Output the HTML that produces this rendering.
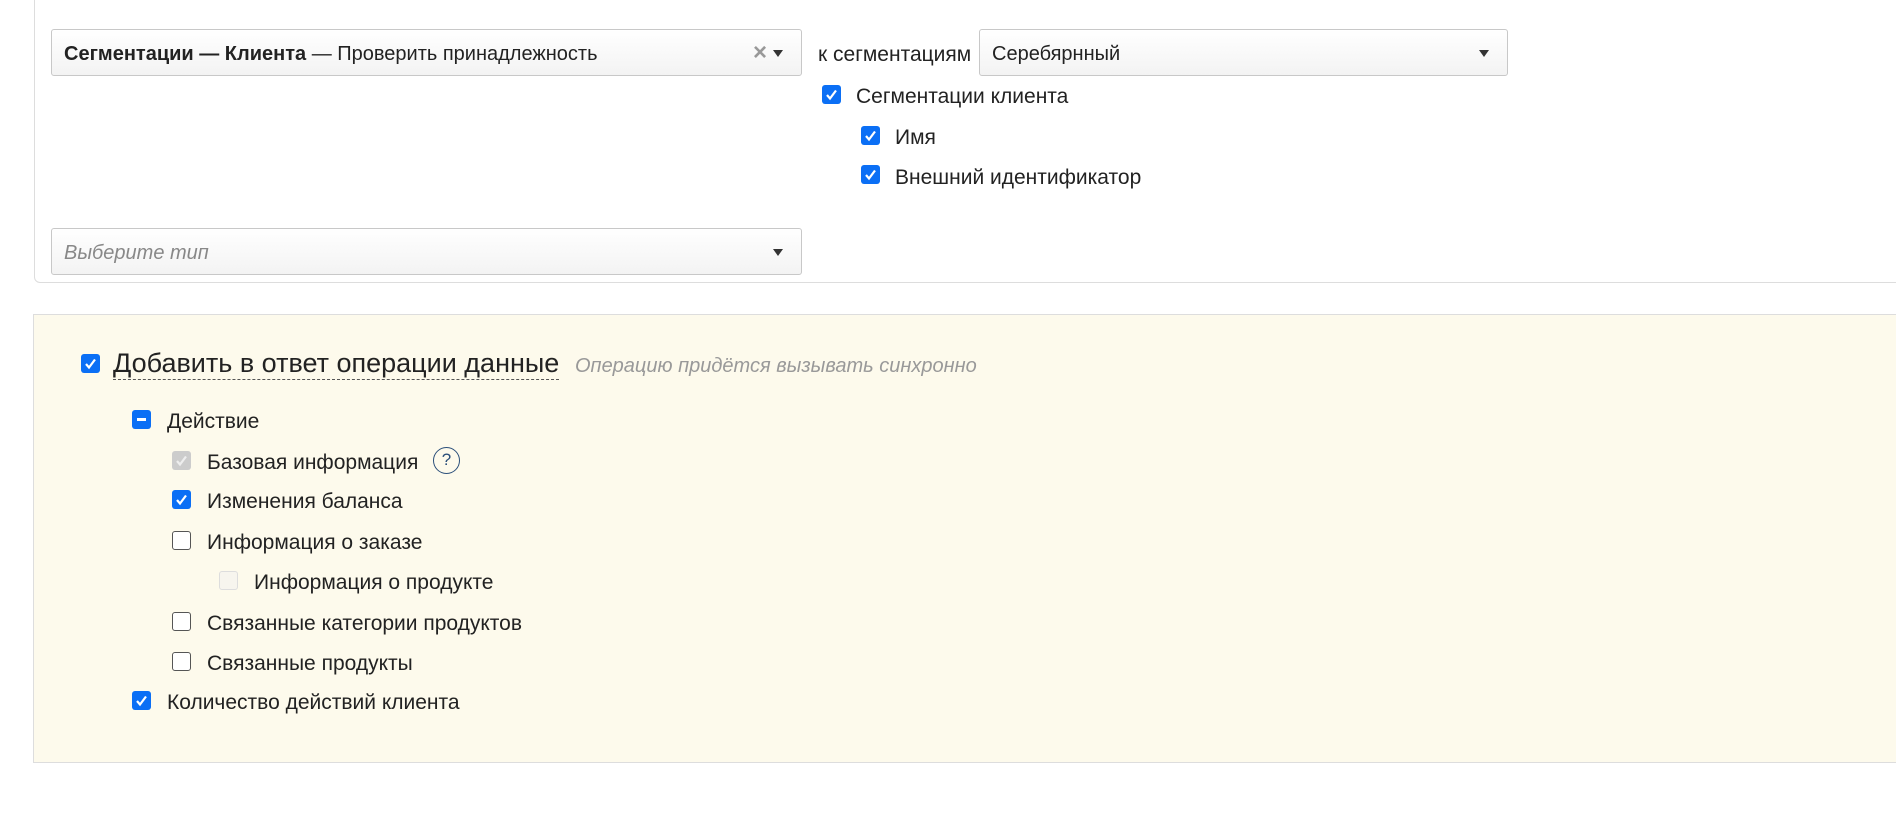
<!DOCTYPE html>
<html><head><meta charset="utf-8"><style>
*{box-sizing:border-box}
body{margin:0;width:1896px;height:822px;background:#fff;font-family:"Liberation Sans",sans-serif;color:#222;position:relative;overflow:hidden;font-size:21px}
.abs{position:absolute}
.panel1{left:34px;top:-5px;width:1900px;height:288px;border:1px solid #ddd;border-radius:0 0 0 6px}
.sel{position:absolute;height:47px;border:1px solid #c8c8c8;border-radius:3px;background:linear-gradient(#fff,#f3f3f3);padding:0 12px;line-height:49px;font-size:20px;white-space:nowrap}
.arr{position:absolute;right:18px;top:20px;width:0;height:0;border-left:5px solid transparent;border-right:5px solid transparent;border-top:7px solid #333}
.cb{position:absolute;width:19px;height:19px;border-radius:3px;background:#0b6ff5}
.cb svg{position:absolute;left:0;top:0}
.ub{position:absolute;width:19px;height:19px;border-radius:3px;border:1.5px solid #555;background:#fff}
.lbl{position:absolute;font-size:21px;line-height:24px;white-space:nowrap}
.panel2{left:33px;top:314px;width:1900px;height:449px;background:#fdfaec;border:1px solid #ddd}
</style></head><body>
<div class="abs panel1"></div>
<div class="sel" style="left:51px;top:29px;width:751px"><b>Сегментации — Клиента</b> — Проверить принадлежность
<span style="position:absolute;right:34px;top:-2px;color:#999;font-size:24px;font-weight:bold">×</span><div class="arr"></div></div>
<div class="lbl" style="left:818px;top:43px">к сегментациям</div>
<div class="sel" style="left:979px;top:29px;width:529px">Серебярнный<div class="arr"></div></div>

<div class="cb" style="left:822px;top:85px"><svg width="19" height="19"><path d="M5 10l3 3.5 6-8" stroke="#fff" stroke-width="2.2" fill="none"/></svg></div>
<div class="lbl" style="left:856px;top:85px">Сегментации клиента</div>
<div class="cb" style="left:861px;top:126px"><svg width="19" height="19"><path d="M5 10l3 3.5 6-8" stroke="#fff" stroke-width="2.2" fill="none"/></svg></div>
<div class="lbl" style="left:895px;top:126px">Имя</div>
<div class="cb" style="left:861px;top:165px"><svg width="19" height="19"><path d="M5 10l3 3.5 6-8" stroke="#fff" stroke-width="2.2" fill="none"/></svg></div>
<div class="lbl" style="left:895px;top:166px">Внешний идентификатор</div>

<div class="sel" style="left:51px;top:228px;width:751px;color:#888;font-style:italic">Выберите тип<div class="arr"></div></div>

<div class="abs panel2"></div>
<div class="cb" style="left:81px;top:354px"><svg width="19" height="19"><path d="M5 10l3 3.5 6-8" stroke="#fff" stroke-width="2.2" fill="none"/></svg></div>
<div class="lbl" style="left:113px;top:348px;font-size:27px;line-height:31px;border-bottom:1.5px dashed #555">Добавить в ответ операции данные</div>
<div class="lbl" style="left:575px;top:354px;font-style:italic;color:#999;font-size:20px">Операцию придётся вызывать синхронно</div>

<div class="cb" style="left:132px;top:410px"><div style="position:absolute;left:5px;top:8px;width:9px;height:3px;background:#fff"></div></div>
<div class="lbl" style="left:167px;top:410px">Действие</div>

<div class="cb" style="left:172px;top:451px;background:#ccc"><svg width="19" height="19"><path d="M5 10l3 3.5 6-8" stroke="#eee" stroke-width="2.2" fill="none"/></svg></div>
<div class="lbl" style="left:207px;top:451px">Базовая информация</div>
<div class="abs" style="left:433px;top:447px;width:27px;height:27px;border:1.5px solid #2b4f7a;border-radius:50%;text-align:center;line-height:24px;color:#2b4f7a;font-size:17px">?</div>

<div class="cb" style="left:172px;top:490px"><svg width="19" height="19"><path d="M5 10l3 3.5 6-8" stroke="#fff" stroke-width="2.2" fill="none"/></svg></div>
<div class="lbl" style="left:207px;top:490px">Изменения баланса</div>
<div class="ub" style="left:172px;top:531px"></div>
<div class="lbl" style="left:207px;top:531px">Информация о заказе</div>
<div class="ub" style="left:219px;top:571px;border-color:#ddd;background:#f7f5ee"></div>
<div class="lbl" style="left:254px;top:571px">Информация о продукте</div>
<div class="ub" style="left:172px;top:612px"></div>
<div class="lbl" style="left:207px;top:612px">Связанные категории продуктов</div>
<div class="ub" style="left:172px;top:652px"></div>
<div class="lbl" style="left:207px;top:652px">Связанные продукты</div>
<div class="cb" style="left:132px;top:691px"><svg width="19" height="19"><path d="M5 10l3 3.5 6-8" stroke="#fff" stroke-width="2.2" fill="none"/></svg></div>
<div class="lbl" style="left:167px;top:691px">Количество действий клиента</div>
</body></html>
